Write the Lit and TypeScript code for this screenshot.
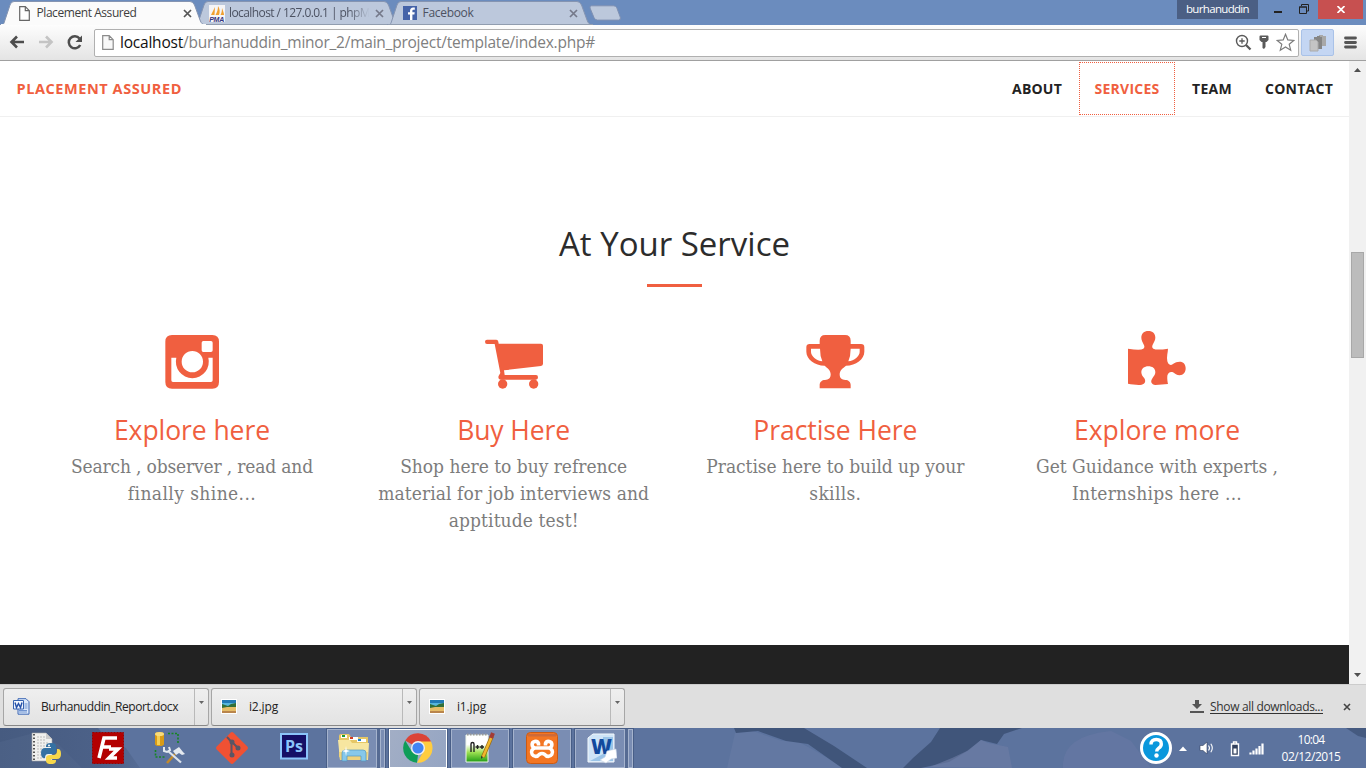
import { LitElement, html, css, svg } from "lit";
import { customElement, property } from "lit/decorators.js";
import { classMap } from "lit/directives/class-map.js";

/** A run of text whose tracking is spread so that it fills a given measure. */
@customElement("set-text")
class SetText extends LitElement {
  static styles = css`
    :host { display: inline-block; white-space: pre; }
    .run { display: inline-block; white-space: pre; }
  `;
  @property({ type: Number }) measure = 0;
  @property() text = "";
  render() {
    return html`<span class="run">${this.text}</span>`;
  }
  async updated() {
    await document.fonts.ready;
    const run = this.renderRoot.querySelector(".run") as HTMLElement;
    run.style.letterSpacing = "0px";
    const natural = run.getBoundingClientRect().width;
    const gap = (this.measure - natural) / this.text.length;
    run.style.letterSpacing = `${gap}px`;
  }
}

const t = (text: string, measure: number) =>
  html`<set-text .text=${text} .measure=${measure}></set-text>`;

const pageIcon = html`<svg class="page-icon" width="11" height="15" viewBox="0 0 11 15">
  <path d="M.7.7h5.6l4 4v9.6H.7z" fill="#fff" stroke="#666" stroke-width="1.2" />
  <path d="M6.3.7v4h4" fill="none" stroke="#666" stroke-width="1.2" />
</svg>`;
const pmaIcon = html`<svg width="17" height="17" viewBox="0 0 17 17">
  <path fill="#f5f5f7" d="M0 0h16v17H0z" />
  <path fill="#f0a030" d="M6 2L5.5 10H2zM9 1c2 3 2 6 1 9H6.500C8 7 9 5 9 1zM13 3c1 3 2 5 2 7h-3.500c1-2 1.500-4 1.500-7z" />
  <text x="0.200" y="16.500" font-family="Liberation Sans" font-weight="700" font-style="italic" font-size="7" textLength="15" fill="#34347c">PMA</text>
</svg>`;
const fbIcon = html`<svg class="fb" width="14" height="14" viewBox="0 0 14 14">
  <path fill="#4563a8" d="M0 0h14v14H0z" />
  <path fill="#fff" d="M7 14V8.500H5V6.300h2V5c0-2.200 1.200-3.400 3.200-3.400h1.600v2.200h-1.200c-1 0-1.200.5-1.200 1.200v1.300h2.300l-.3 2.200h-2V14z" />
</svg>`;
const cross = html`<svg class="x" width="9" height="9" viewBox="0 0 9 9">
  <path d="M1 1l7 7M8 1L1 8" stroke="currentColor" stroke-width="1.700" />
</svg>`;

const wordDoc = html`<svg width="17" height="17" viewBox="0 0 17 17">
  <path d="M5 .7h8l3 3v12.500H5z" fill="#dce9fb" stroke="#3d67b4" />
  <path d="M11.500 6h3M11.500 8h3M11.500 10h3M6 12.500h8M6 14h8" stroke="#6f93cf" />
  <path d="M.5 2.500h10v8.500H.5z" fill="#f3f8ff" stroke="#3663b0" />
  <path d="M2 4.500l1.500 5 2-4 2 4 1.500-5" fill="none" stroke="#2450a8" stroke-width="1.400" />
</svg>`;
const jpgDoc = html`<svg width="17" height="15" viewBox="0 0 17 15">
  <path fill="#fff" d="M0 0h16v15H0z" /><path fill="#2279b5" d="M1 1h14v7H1z" />
  <path fill="#56b6dc" d="M1 4h14v4H1z" /><path fill="#326f38" d="M1 5l3 1 3 1 3-2 5-1v5H1z" />
  <path fill="#e5bd67" d="M1 9l5-1h9v6H1z" /><path fill="#b9854c" d="M1 12h14v2H1z" />
</svg>`;

const glyphs = [
  html`<svg class="glyph" viewBox="30 24 192 192"><path fill-rule="evenodd" d="M66 45h121q20 0 20 20v121q0 20-20 20H66q-20 0-20-20V65q0-20 20-20zM160 63q-5 0-5 5v23q0 5 5 5h23q5 0 5-5V68q0-5-5-5zM64 113v68q0 5 5 5h114q5 0 5-5v-68h-13a49.500 49.500 0 1 1-96 0zM127 93a32 32 0 1 0 0 64a32 32 0 1 0 0-64z" /></svg>`,
  html`<svg class="glyph" viewBox="996 24 192 192"><path d="M1011 59h28q5 0 6 6l1 6h127q6 0 6 6v54q0 6-6 7l-111 13 2 14h94q6 0 6 7t-6 7H1052q-7 0-7-7 0-4 6-13L1034 72h-23q-6 0-6-6.500t6-6.500z" /><circle cx="1058" cy="192" r="14" /><circle cx="1151" cy="192" r="14" /></svg>`,
  html`<svg class="glyph" viewBox="40 24 192 192"><path fill-rule="evenodd" d="M90 72V62q0-17 17-17h59q17 0 17 17v10h31q10 0 10 10v13c0 22-25 42-55 42-10 8-19 14-19 26 0 11 6 17 17 17 9 0 16 6 16 15v10H90v-10c0-9 7-15 16-15 11 0 17-6 17-17 0-12-9-18-18-26-30 0-55-20-55-42V82q0-10 10-10zM64 86v10c0 12 16 26 34 28q-7-16-7-38zM210 86h-27q0 22-7 38c18-2 34-16 34-28z" /></svg>`,
  html`<svg class="glyph" viewBox="1006 24 192 192"><path d="M1015 86q38 6 46 0c10-8-6-18-6-33 0-12 8-20 21-20s21 8 21 20c0 14-16 25-6 33q10 5 44 0c0 10-5 24-2 38 3 10 9 14 17 8 7-5 12-7 20-7 11 0 18 8 18 20s-7 21-18 21c-9 0-14-6-20-9-9-3-15 2-17 10-1 9 1 20 2 25-12 0-24 3-38 3-12-2-15-9-10-18 5-8 10-13 10-20 0-12-9-18-21-18s-21 7-21 18c0 8 5 13 9 18 5 8 3 17-8 19-12 2-28-1-41-3z" /></svg>`,
];

const services = [
  { title: ["Explore here", 156], lines: [["Search , observer , read and", 242], ["finally shine...", 128]] },
  { title: ["Buy Here", 113], lines: [["Shop here to buy refrence", 227], ["material for job interviews and", 271], ["apptitude test!", 130]] },
  { title: ["Practise Here", 164], lines: [["Practise here to build up your", 258], ["skills.", 52]] },
  { title: ["Explore more", 166], lines: [["Get Guidance with experts ,", 242], ["Internships here ...", 170]] },
] as { title: [string, number]; lines: [string, number][] }[];

const pinned = [
  html`<svg width="32" height="32" viewBox="0 0 32 32">
    <path fill="#f0f0ee" stroke="#aaa" stroke-width=".6" d="M2 1h14l6 6v22H2z" /><path fill="#ccc" d="M16 1v6h6z" />
    <path stroke="#555" stroke-width="2" stroke-dasharray="1.500 2" d="M4 2v27" /><path stroke="#bbb" stroke-dasharray="2 1" d="M7 5h8M7 8h9M7 11h12M7 14h8M7 17h5M7 20h4M7 23h5M7 26h8" />
    <path fill="#3471a3" d="M16 14q0-3 5-3t5 3v5q0 3-4 3h-4q-3 0-3 4h-1q-3 0-3-5t4-5h6v-1h-5z" />
    <path fill="#f8d84a" d="M27 17h1q3 0 3 5t-4 5h-6v1h5v1q0 3-5 3t-5-3v-3q0-3 4-3h3q4 0 4-4z" /><circle cx="19" cy="13.500" r="1" fill="#fff" />
  </svg>`,
  html`<svg width="32" height="32" viewBox="0 0 32 32">
    <path fill="#b30000" stroke="#900" stroke-dasharray="2 1" d="M.5.5h31v31H.5z" />
    <path fill="none" stroke="#fff" stroke-width="3.600" d="M7 26l5-20h13M9 15h10M17 17h9l-9 9h8" />
  </svg>`,
  html`<svg width="32" height="32" viewBox="0 0 32 32">
    <path fill="#d99b16" d="M1 2q0-2 4.500-2T10 2v10q0 2-4.500 2T1 12z" /><path fill="#f5cf54" d="M3 3h3v10H3z" /><ellipse cx="5.500" cy="2" rx="4.500" ry="2" fill="#f8dc7c" />
    <path d="M14 1.500h10v10M1.500 18v7h10" fill="none" stroke="#168522" stroke-width="1.600" stroke-dasharray="2 1.500" />
    <path stroke="#c38a2b" stroke-width="2.600" d="M13 31l8-9" /><path stroke="#dce3ec" stroke-width="2.200" d="M14 19l13 11.500" /><path fill="none" stroke="#e4e9ef" stroke-width="2" d="M10 15v4l3 1 3-2-1-3" /><path fill="#e4e9ef" d="M19 19l6-4 4 5 2 2-3 1-3-2-3 2z" />
  </svg>`,
  html`<svg width="32" height="32" viewBox="0 0 32 32">
    <path fill="#f05133" d="M14.500.7q1.500-1.300 3 0l13.800 13.800q1.300 1.500 0 3L17.500 31.300q-1.500 1.300-3 0L.7 17.500q-1.300-1.500 0-3z" />
    <path stroke="#5b5564" stroke-width="2" fill="none" d="M11 5l4.500 5v14M16 10l6 6" /><g fill="#5b5564"><circle cx="16" cy="10" r="2.500" /><circle cx="16" cy="23" r="2.500" /><circle cx="22" cy="16" r="2.500" /></g>
  </svg>`,
  html`<svg class="ps" width="28" height="28" viewBox="0 0 28 28">
    <path fill="#150f66" stroke="#8bc4fa" stroke-width="2" d="M1 1h26v24.500H1z" />
    <text x="5" y="19" font-family="Open Sans" font-weight="700" font-size="16" textLength="18" lengthAdjust="spacingAndGlyphs" fill="#8bc4fa">Ps</text>
  </svg>`,
];

const running = [
  { stacked: true, active: false, icon: html`<svg width="34" height="32" viewBox="0 0 34 32">
    <path fill="#e6c765" d="M2 4q0-2 2-2h8l2 3h17v20H2z" /><path fill="#fff" d="M4 3h6v3H4zM12 5h9v3h-9zM20 7h9v3h-9z" />
    <path fill="#1b9a32" d="M5 3h3v2H5z" /><path fill="#d23c25" d="M13 5h3v2h-3z" /><path fill="#1b83d2" d="M21 7h3v2h-3z" />
    <path fill="#f7e6a0" d="M1 8h12l2 3h17l-1 17H3z" /><path fill="#edd27c" d="M2 20h29l-1 8H3z" />
    <path fill="#86c8ea" stroke="#5598c0" stroke-width=".7" d="M5 29V21q0-3 3-3h18q3 0 3 3v8h-5v-5H10v5z" /><path fill="#fff" d="M9 14l.7 4 3.300 1-3.300 1-.7 4-.7-4-3.300-1 3.300-1z" />
  </svg>` },
  { stacked: false, active: true, icon: html`<svg width="30" height="30" viewBox="0 0 30 30">
    <path fill="#db4437" d="M15 15L2.200 7.500A14.700 14.700 0 0 1 28 8.500z" />
    <path fill="#0f9d58" d="M2.200 7.500L8.800 18.500 15 22 14 29.700A14.700 14.700 0 0 1 2.200 7.500z" />
    <path fill="#ffcd40" d="M15 8.500h13a14.700 14.700 0 0 1-14 21.200l6.600-11.500z" /><circle cx="15" cy="15" r="7" fill="#f1f1f1" /><circle cx="15" cy="15" r="5.600" fill="#4285f4" />
  </svg>` },
  { stacked: false, active: false, icon: html`<svg width="30" height="32" viewBox="0 0 30 32">
    <defs><linearGradient id="g" x2="0" y2="1"><stop offset=".35" stop-color="#fff" /><stop offset=".65" stop-color="#9be050" /><stop offset="1" stop-color="#1f9c14" /></linearGradient></defs>
    <path fill="url(#g)" stroke="#eef5e9" d="M1 3h22v27H1z" /><path stroke="#999" stroke-width="2" stroke-dasharray="1.500 1.500" d="M2 2.500h20" />
    <path fill="none" stroke="#222" stroke-width="1.400" d="M6 20v-8q0-1.500 1.500-1.500T9 12v8M10.500 15h4M12.500 13v4M15 15h4M17 13v4" />
    <path stroke="#9a6b12" stroke-width="4" d="M18 25l9-21" /><path stroke="#f1b62d" stroke-width="2.600" d="M18 25l9-21" /><path stroke="#a33b35" stroke-width="4" d="M26 6l2-5" /><path fill="#333" d="M16 24l2 1-2 2z" />
  </svg>` },
  { stacked: false, active: false, icon: html`<svg width="32" height="32" viewBox="0 0 32 32">
    <rect x=".5" y=".5" width="31" height="31" rx="4" fill="#f37623" stroke="#cc5a12" /><path fill="#ce6a38" d="M2 2h28v2.500H2z" />
    <path fill="none" stroke="#fff" stroke-width="3.600" d="M12.500 13.500V11.500a3.300 3.300 0 1 0-3.300 4.500h13.600a3.300 3.300 0 1 0-3.300-4.500v2M9.200 16a4.200 4.200 0 1 0 4 6.500q2.800-2 5.600 0a4.200 4.200 0 1 0 4-6.500" />
  </svg>` },
  { stacked: true, active: false, icon: html`<svg width="30" height="31" viewBox="0 0 30 31">
    <path fill="#cfe4f7" stroke="#f3f8fc" d="M1 5l5-4h21v28H1z" /><path fill="#9bc4e8" d="M16 4h10v24H3l13-7z" />
    <text x="4" y="21" font-family="Open Sans" font-weight="800" font-size="21" textLength="21" lengthAdjust="spacingAndGlyphs" fill="#12499d">W</text>
    <path fill="#fff" stroke="#c7d4e4" stroke-width=".6" d="M20 18l9-2 1 9-6 1-5 4-6-3 5-3z" />
  </svg>` },
];

@customElement("app-root")
class AppRoot extends LitElement {
  static styles = css`
    :host { display: flex; flex-direction: column; width: 1366px; height: 768px; overflow: hidden; background: #fff; font-family: "Open Sans", "Noto Sans", sans-serif; }
    * { box-sizing: border-box; }
    svg { display: block; flex: none; }

    .strip { display: flex; height: 25px; background: #6b8cbe; position: relative; }
    .tab { position: relative; z-index: 1; width: 208px; height: 25px; margin-right: -14.500px; flex: none; display: flex; align-items: center; padding: 1px 0 0 15px; font-size: 12px; color: #4c5262; }
    .tab.front { z-index: 2; color: #3e3e3e; }
    .shape { position: absolute; left: 0; top: 0; z-index: -1; }
    .fav { width: 20px; flex: none; }
    .page-icon { margin-left: 4px; }
    .fb { margin-left: 1px; }
    .name { width: 142px; margin-right: 4.500px; overflow: hidden; height: 18px; line-height: 18px; padding-left: .5px; }
    .front .fav { width: 21px; }
    .name.fade { -webkit-mask-image: linear-gradient(90deg, #000 84%, transparent 99%); }
    .x { color: #75798a; }
    .front .x { color: #555; }
    .plus { position: absolute; left: 589px; top: 5px; }
    .window { margin-left: auto; display: flex; align-items: flex-start; }
    .user { width: 81px; height: 19px; background: #4b5f84; color: #fff; font-size: 11.500px; line-height: 17px; text-align: center; margin-right: 13px; }
    .close { width: 45px; height: 19px; background: #c75050; display: grid; place-items: center; margin-right: 3px; }
    .min { margin: 11px 17px 0 3px; }
    .max { margin: 4px 9px 0 0; }

    .bar { height: 36px; background: linear-gradient(#fdfdfd, #e4e4e4); border-bottom: 1px solid #a0a0a0; display: flex; align-items: center; padding: 0 9px; }
    .nav { display: flex; gap: 13px; margin-right: 11px; }
    .url { flex: 1; height: 28px; background: #fff; border: 1px solid #b0b0b0; border-radius: 2px; display: flex; align-items: center; padding: 0 3px 0 7px; font-size: 15.500px; line-height: 20px; color: #808080; }
    .addr { padding-bottom: 1px; display: flex; }
    .url .host { color: #111; margin-left: 6px; }
    .tools { margin-left: auto; display: flex; align-items: center; gap: 7px; }
    .ext { width: 33px; height: 27px; margin: 0 10px 0 2px; background: #c4d6f3; border: 1px solid #a9c2e8; border-radius: 2px; display: grid; place-items: center; }

    .view { height: 623px; display: flex; }
    .page { width: 1349px; display: flex; flex-direction: column; }
    .menu { height: 56px; border-bottom: 1px solid #f0f0f0; display: flex; justify-content: space-between; padding: 1px 0 0 16.500px; font-weight: 700; font-size: 14px; color: #222; }
    .brand { color: #f05f40; line-height: 53px; font-size: 14.500px; }
    .links { display: flex; line-height: 54px; padding-right: 16px; }
    .link { width: 83px; padding-left: 16px; height: 53px; }
    .link.focus { width: 96px; outline: 1px dotted #f05f40; outline-offset: -1px; color: #f05f40; padding-left: 15.500px; }
    .about { width: 83px; }
    .team { width: 74px; padding-left: 17px; }
    .contact { width: 84px; }
    .main { height: 528px; padding-top: 102px; display: flex; flex-direction: column; align-items: center; }
    .head { font-size: 33px; line-height: 50px; color: #2c2c2c; }
    .rule { width: 55px; height: 3px; background: #f05f40; margin-top: 15px; }
    .cards { display: grid; grid-template-columns: repeat(4, 321.700px); margin-top: 41px; }
    .card { display: flex; flex-direction: column; align-items: center; }
    .glyph { width: 64px; height: 64px; fill: #f05f40; }
    .title { margin-top: 21px; font-size: 26.500px; line-height: 34px; height: 40px; color: #f05f40; }
    .line { font-family: "DejaVu Serif Condensed", "DejaVu Serif", serif; font-stretch: condensed; font-size: 19px; line-height: 27px; height: 27px; color: #7c7c7c; }
    .dark { height: 39px; background: #222; }
    .scroll { width: 17px; background: #f1f1f1; display: flex; flex-direction: column; align-items: center; padding: 7px 0; }
    .thumb { width: 13px; height: 106px; background: #bcbcbc; border: 1px solid #a8a8a8; margin: 180px 0 auto; }

    .shelf { height: 44px; background: #dfdfdf; border-top: 1px solid #ccc; display: flex; align-items: center; padding-left: 3px; gap: 2px; font-size: 12px; color: #222; }
    .item { width: 206px; height: 38px; border: 1px solid #a6a6a6; border-bottom-color: #888; border-radius: 3px; background: linear-gradient(#efefef, #e3e3e3); display: flex; align-items: center; padding-left: 9px; gap: 11px; }
    .caret { margin-left: auto; width: 14px; height: 36px; border-left: 1px solid #b9b9b9; padding: 12px 0 0 4px; }
    .all { margin-left: auto; display: flex; align-items: center; padding-right: 15px; color: #333; }
    .link2 { margin: 1px 20px 0 6px; border-bottom: 1px solid #333; line-height: 13px; height: 14px; }

    .task { height: 40px; position: relative; display: flex; align-items: center; background: #5c739e; z-index: 0; }
    .wall { position: absolute; inset: 0; z-index: -1; }
    .pin { width: 62px; display: grid; place-items: center; }
    .ps { margin-bottom: 3px; }
    .pins { display: flex; padding-left: 15px; width: 327px; align-items: center; }
    .apps { display: flex; gap: 4px; }
    .app { width: 58px; height: 39px; border: 1px solid #a5b3cd; box-shadow: 0 0 0 1px #485e87; background: rgba(160, 174, 205, 0.45); display: flex; align-items: center; justify-content: center; position: relative; }
    .app.active { background: linear-gradient(110deg, #a2aec5, #95a5c3); border-color: #fff; }
    .app.stacked { padding-right: 5px; }
    .app.stacked::after { content: ""; position: absolute; right: 3px; top: -1px; bottom: -1px; width: 3px; background: #566b93; border: 0 solid #a5b3cd; border-width: 0 1px; }
    .tray { margin-left: auto; display: flex; align-items: center; color: #fff; font-size: 12px; }
    .clock { width: 86px; margin-left: 6px; line-height: 17px; padding: 0 20px 1px 0; margin-right: 2px; white-space: nowrap; display: flex; flex-direction: column; align-items: center; }
  `;

  tab(icon: unknown, name: string, w: number, front = false, fade = false) {
    return html`<div class=${classMap({ tab: true, front })}>
      <svg class="shape" width="208" height="25" viewBox="0 0 208 25">
        <path d="M0 25C4 25 4 23 5 20L10 5Q11 1.500 14 1.500H190Q193 1.500 194.500 5L200 20Q201.500 25 206 25z" fill=${front ? "#fbfbfb" : "#bcc8dc"} stroke="#8594b1" />
        ${front ? svg`<path d="M1 24h205v1H1z" fill="#fbfbfb" />` : svg`<path d="M1 24h205v1H1z" fill="#919daf" />`}
      </svg>
      <div class="fav">${icon}</div><div class=${classMap({ name: true, fade })}>${t(name, w)}</div>${cross}
    </div>`;
  }

  file(icon: unknown, name: string, w: number) {
    return html`<div class="item">${icon}${t(name, w)}
      <div class="caret"><svg width="5" height="3" viewBox="0 0 5 3"><path d="M0 0h5L2.500 3z" fill="#666" /></svg></div>
    </div>`;
  }

  render() {
    return html`
      <div class="strip">
        ${this.tab(pageIcon, "Placement Assured", 100, true)}
        ${this.tab(pmaIcon, "localhost / 127.0.0.1 | phpM", 141, false, true)}
        ${this.tab(fbIcon, "Facebook", 51)}
        <svg class="plus" width="33" height="17" viewBox="0 0 33 17"><path d="M2.500.8h22q2.500 0 3.300 2l3.500 9.500q.8 2.800-1.800 2.800h-21q-2.500 0-3.500-2.500L1 3q-.5-2.200 1.500-2.200z" fill="#bcc8dc" stroke="#7f90b2" /></svg>
        <div class="window">
          <div class="user">${t("burhanuddin", 63)}</div>
          <svg class="min" width="8" height="3" viewBox="0 0 8 3"><path d="M0 0h8v2H0z" fill="#222" /></svg>
          <svg class="max" width="10" height="10" viewBox="0 0 10 10"><path d="M.5 3h7v6.500h-7zM0 3h8M2.500 2V.5h7v6.500H8" fill="none" stroke="#222" /></svg>
          <div class="close"><svg width="8" height="7" viewBox="0 0 8 7"><path d="M.5 0l7 7M7.500 0l-7 7" stroke="#fff" stroke-width="1.700" /></svg></div>
        </div>
      </div>
      <div class="bar">
        <div class="nav">
          <svg width="16" height="14" viewBox="0 0 16 14"><path d="M8 1.500L2.500 7 8 12.500M2.500 7H15" fill="none" stroke="#4d4d4d" stroke-width="2.600" /></svg>
          <svg width="16" height="14" viewBox="0 0 16 14"><path d="M8 1.500L13.500 7 8 12.500M13.500 7H1" fill="none" stroke="#c4c4c4" stroke-width="2.600" /></svg>
          <svg width="16" height="15" viewBox="0 0 16 15"><path d="M12.500 3.500A6 6 0 1 0 13.200 10" fill="none" stroke="#4d4d4d" stroke-width="2.500" /><path d="M15 .5V7H8.500z" fill="#4d4d4d" /></svg>
        </div>
        <div class="url">
          <svg width="12" height="15" viewBox="0 0 12 15"><path d="M.7.7h6.500l4 4v9.600H.7zM7.200.7v4h4" fill="#f8f8f8" stroke="#8b8b8b" stroke-width="1.200" /></svg>
          <div class="addr"><span class="host">${t("localhost", 63)}</span>${t("/burhanuddin_minor_2/main_project/template/index.php#", 412)}</div>
          <div class="tools">
            <svg width="17" height="17" viewBox="0 0 17 17"><circle cx="7" cy="7" r="5.500" fill="none" stroke="#5a5a5a" stroke-width="1.400" /><path d="M4.300 7h5.400M7 4.300v5.400" stroke="#5a5a5a" stroke-width="1.300" /><path d="M11 11l4.500 4.500" stroke="#5a5a5a" stroke-width="2.300" /></svg>
            <svg width="10" height="15" viewBox="0 0 10 15"><path d="M1.500.5h7q1 0 1 1V5L7.500 7h-5L.5 5V1.500q0-1 1-1zM3.500 7h3v5L5 14l-1.500-1z" fill="#5a5a5a" /><path d="M3 2.500h4" stroke="#fff" /></svg>
            <svg width="19" height="19" viewBox="0 0 19 19"><path d="M9.500 1.300l2.300 5.600 6 .5-4.600 3.900 1.500 5.900-5.200-3.200-5.200 3.200 1.500-5.900L1.200 7.400l6-.5z" fill="#fff" stroke="#7b7b7b" stroke-width="1.200" /></svg>
          </div>
        </div>
        <div class="ext"><svg width="18" height="18" viewBox="0 0 18 18"><path d="M10 1h4v1h3v10h-7z" fill="#a8a8a8" /><path d="M5 4V3h3V2h3v1h2v12H5z" fill="#858585" /><path d="M1 6h6l2 2v9H1z" fill="#c4c4c4" stroke="#aaa" /></svg></div>
        <svg width="13" height="13" viewBox="0 0 13 13"><path d="M1.500 2h10M1.500 6.500h10M1.500 11h10" stroke="#555" stroke-width="2.800" stroke-linecap="round" /></svg>
      </div>
      <div class="view">
        <div class="page">
          <div class="menu">
            <div class="brand">${t("PLACEMENT ASSURED", 165.5)}</div>
            <div class="links">
              <div class="link about">${t("ABOUT", 50)}</div>
              <div class="link focus">${t("SERVICES", 65)}</div>
              <div class="link team">${t("TEAM", 40)}</div>
              <div class="link contact">${t("CONTACT", 68)}</div>
            </div>
          </div>
          <div class="main">
            <div class="head">${t("At Your Service", 231)}</div>
            <div class="rule"></div>
            <div class="cards">
              ${services.map((s, i) => html`<div class="card">${glyphs[i]}
                <div class="title">${t(...s.title)}</div>
                ${s.lines.map((l) => html`<div class="line">${t(...l)}</div>`)}
              </div>`)}
            </div>
          </div>
          <div class="dark"></div>
        </div>
        <div class="scroll">
          <svg width="7" height="4" viewBox="0 0 7 4"><path d="M0 4h7L3.500 0z" fill="#505050" /></svg>
          <div class="thumb"></div>
          <svg width="7" height="4" viewBox="0 0 7 4"><path d="M0 0h7L3.500 4z" fill="#505050" /></svg>
        </div>
      </div>
      <div class="shelf">
        ${this.file(wordDoc, "Burhanuddin_Report.docx", 137)}
        ${this.file(jpgDoc, "i2.jpg", 29)}
        ${this.file(jpgDoc, "i1.jpg", 29)}
        <div class="all">
          <svg width="14" height="13" viewBox="0 0 14 13"><path d="M5 0h4v4h3L7 9 2 4h3zM0 11h14v2H0z" fill="#555" /></svg>
          <span class="link2">${t("Show all downloads...", 113)}</span>
          <svg width="8" height="8" viewBox="0 0 8 8"><path d="M1 1l6 6M7 1L1 7" stroke="#444" stroke-width="1.600" /></svg>
        </div>
      </div>
      <div class="task">
        <svg class="wall" width="1366" height="40" viewBox="0 0 1366 40">
          <defs><linearGradient id="dusk"><stop offset="0" stop-color="#465b80" /><stop offset=".7" stop-color="#4c6188" /><stop offset="1" stop-color="#566c95" /></linearGradient></defs>
          <path fill="url(#dusk)" d="M0 0h98l10 12 18 8 14 20H0z" /><path fill="#5b6e93" d="M0 14l30-8 28 10 24 24H0z" opacity=".3" />
          <path fill="#687ba5" d="M735 5l12-4 35 12h15l22 12 25 15H727z" opacity=".6" />
          <path fill="#40557a" d="M734 0h70l30 18 33 22h-25l-34-24-22-3-28-10-22 2zM940 0h82l-18 6-7 10-16-4-12 10-20 12-28 6h-18l10-10 18-16z" />
          <path fill="#6d7da5" d="M930 39l22-9 15-7 14-11 7 3 20 4 4 21z" opacity=".65" /><path fill="#6c7ba7" d="M1063 40q-2-32 48-37l20 10 20 27z" opacity=".45" />
          <path fill="#455a80" d="M1346 0h20v10l-8-2z" />
        </svg>
        <div class="pins">${pinned.map((p) => html`<div class="pin">${p}</div>`)}</div>
        <div class="apps">${running.map((r) => html`<div class=${classMap({ app: true, active: r.active, stacked: r.stacked })}>${r.icon}</div>`)}</div>
        <div class="tray">
          <svg width="32" height="32" viewBox="0 0 32 32"><circle cx="16" cy="16" r="14.500" fill="#0a97dc" stroke="#fff" stroke-width="3" /><path d="M11 12.500q0-5 5.300-5 5 0 5 4.500 0 2.500-2.600 4.200-2 1.400-2 3.300" fill="none" stroke="#fff" stroke-width="3.400" /><circle cx="16.500" cy="23.500" r="2.200" fill="#fff" /></svg>
          <svg width="100" height="20" viewBox="0 0 100 20">
            <path d="M7 13h8l-4-4.500z" fill="#fff" />
            <path d="M28 7.500h3l4-3.500v12l-4-3.500h-3z" fill="#fff" stroke="#33425f" stroke-width=".6" /><path d="M36.500 7.500q2 2.500 0 5M38.800 5.700q3 4.300 0 8.600" fill="none" stroke="#fff" stroke-width="1.100" />
            <path d="M59.500 6h7v11.500h-7zM61.500 5.500V4h3v1.500" fill="#33425f" stroke="#fff" stroke-width="1.400" /><path d="M61.500 10.500h3v5h-3z" fill="#fff" />
            <path d="M78.500 16.500v-2M81.500 16.500v-4M84.500 16.500v-6M87.500 16.500V8M90.500 16.500v-11" stroke="#fff" stroke-width="2.200" />
          </svg>
          <div class="clock">${t("10:04", 27)}${t("02/12/2015", 59)}</div>
        </div>
      </div>
    `;
  }
}
